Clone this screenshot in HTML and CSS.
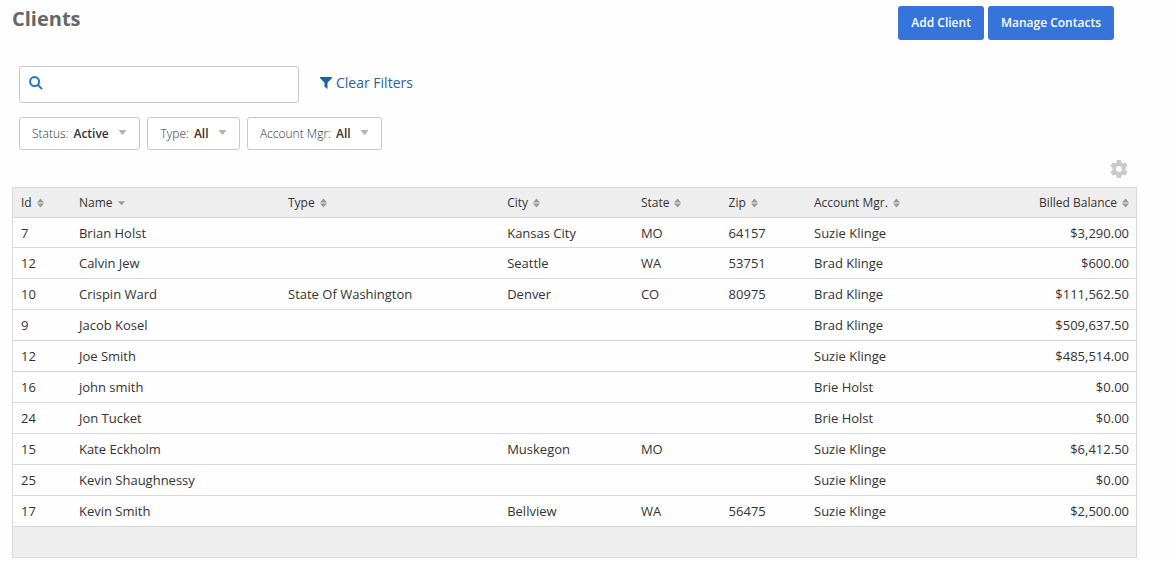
FILE: index.html
```html
<!DOCTYPE html>
<html lang="en">
<head>
<meta charset="utf-8">
<meta name="viewport" content="width=device-width, initial-scale=1">
<title>Clients</title>
<link rel="stylesheet" href="styles.css">
</head>
<body>
<svg class="defs" aria-hidden="true">
  <symbol id="sort" viewBox="0 0 7 10"><path d="M3.5 0.4 7 4.4H0ZM0 5.6H7L3.500 9.600Z"/></symbol>
  <symbol id="down" viewBox="0 0 7 10"><path d="M0 3.200H7L3.500 7.200Z"/></symbol>
  <symbol id="caret" viewBox="0 0 8 5"><path d="M0 0H8L4.600 4.600H3.400Z"/></symbol>
</svg>
<main class="page">
  <header class="top">
    <h1 class="title">Clients</h1>
    <div class="actions">
      <button class="btn" type="button">Add Client</button>
      <button class="btn" type="button">Manage Contacts</button>
    </div>
  </header>

  <form class="controls">
    <div class="search-row">
      <label class="search">
        <svg class="search-icon" viewBox="0 0 14 14" aria-hidden="true"><circle cx="5.6" cy="5.6" r="4.5"/><path d="M9 9 13.1 13.1"/></svg>
        <input class="search-input" type="search" aria-label="Search clients">
      </label>
      <a class="clear" href="#"><svg class="funnel" viewBox="0 0 12 12" aria-hidden="true"><path d="M0 0H12V1L7.500 5.700V12L4.500 9.700V5.700L0 1Z"/></svg>Clear Filters</a>
    </div>
    <div class="filters">
      <label class="filter"><span class="filter-name">Status:</span><select class="filter-select"><option>Active</option></select><svg class="caret" aria-hidden="true"><use href="#caret"/></svg></label>
      <label class="filter"><span class="filter-name">Type:</span><select class="filter-select"><option>All</option></select><svg class="caret" aria-hidden="true"><use href="#caret"/></svg></label>
      <label class="filter"><span class="filter-name">Account Mgr:</span><select class="filter-select"><option>All</option></select><svg class="caret" aria-hidden="true"><use href="#caret"/></svg></label>
    </div>
  </form>

  <div class="tools">
    <button class="gear" type="button" aria-label="Table settings">
      <svg class="gear-icon" viewBox="0 0 24 24" aria-hidden="true"><path fill-rule="evenodd" d="M9.300 0h5.400l.7 3.400 1.900 1.100 3.300-1.100 2.700 4.600-2.600 2.300v3.400l2.600 2.300-2.700 4.600-3.300-1.100-1.900 1.100-.7 3.400H9.300l-.7-3.400-1.900-1.100-3.300 1.100L.7 16l2.600-2.300v-3.400L.7 8l2.700-4.600 3.300 1.100 1.900-1.100ZM12 8a4 4 0 1 0 0 8 4 4 0 0 0 0-8Z"/></svg>
    </button>
  </div>

  <table class="clients">
    <colgroup><col class="c-id"><col class="c-name"><col class="c-type"><col class="c-city"><col class="c-state"><col class="c-zip"><col class="c-mgr"><col class="c-balance"></colgroup>
    <thead>
      <tr>
        <th>Id<svg class="sort"><use href="#sort"/></svg></th>
        <th>Name<svg class="sort"><use href="#down"/></svg></th>
        <th>Type<svg class="sort"><use href="#sort"/></svg></th>
        <th>City<svg class="sort"><use href="#sort"/></svg></th>
        <th>State<svg class="sort"><use href="#sort"/></svg></th>
        <th>Zip<svg class="sort"><use href="#sort"/></svg></th>
        <th>Account Mgr.<svg class="sort"><use href="#sort"/></svg></th>
        <th class="num">Billed Balance<svg class="sort"><use href="#sort"/></svg></th>
      </tr>
    </thead>
    <tbody>
      <tr><td>7</td><td>Brian Holst</td><td></td><td>Kansas City</td><td>MO</td><td>64157</td><td>Suzie Klinge</td><td class="num">$3,290.00</td></tr>
      <tr><td>12</td><td>Calvin Jew</td><td></td><td>Seattle</td><td>WA</td><td>53751</td><td>Brad Klinge</td><td class="num">$600.00</td></tr>
      <tr><td>10</td><td>Crispin Ward</td><td>State Of Washington</td><td>Denver</td><td>CO</td><td>80975</td><td>Brad Klinge</td><td class="num">$111,562.50</td></tr>
      <tr><td>9</td><td>Jacob Kosel</td><td></td><td></td><td></td><td></td><td>Brad Klinge</td><td class="num">$509,637.50</td></tr>
      <tr><td>12</td><td>Joe Smith</td><td></td><td></td><td></td><td></td><td>Suzie Klinge</td><td class="num">$485,514.00</td></tr>
      <tr><td>16</td><td>john smith</td><td></td><td></td><td></td><td></td><td>Brie Holst</td><td class="num">$0.00</td></tr>
      <tr><td>24</td><td>Jon Tucket</td><td></td><td></td><td></td><td></td><td>Brie Holst</td><td class="num">$0.00</td></tr>
      <tr><td>15</td><td>Kate Eckholm</td><td></td><td>Muskegon</td><td>MO</td><td></td><td>Suzie Klinge</td><td class="num">$6,412.50</td></tr>
      <tr><td>25</td><td>Kevin Shaughnessy</td><td></td><td></td><td></td><td></td><td>Suzie Klinge</td><td class="num">$0.00</td></tr>
      <tr><td>17</td><td>Kevin Smith</td><td></td><td>Bellview</td><td>WA</td><td>56475</td><td>Suzie Klinge</td><td class="num">$2,500.00</td></tr>
    </tbody>
    <tfoot><tr><td colspan="8"></td></tr></tfoot>
  </table>
</main>
</body>
</html>
```
FILE: styles.css
```css
* { box-sizing: border-box; }
body {
  margin: 0;
  background: #fefefe;
  color: #333;
  font: 13px/18px "Open Sans", "Noto Sans", sans-serif;
}
button, input, select { font: inherit; }
.defs { position: absolute; width: 0; height: 0; }
.page { padding: 6px 35px 4px 12px; }

.top {
  display: flex;
  justify-content: space-between;
  align-items: flex-start;
  padding-right: 23px;
}
.title { margin: 0; font-size: 20px; line-height: 26px; font-weight: 700; color: #666; }
.actions { display: flex; gap: 4px; }
.btn {
  height: 34px;
  padding: 0 13px;
  border: 0;
  border-radius: 3px;
  background: #3673db;
  color: #fff;
  font-size: 12px;
  font-weight: 600;
}

.controls { margin: 26px 0 0; padding-left: 7px; }
.search-row { display: flex; align-items: center; gap: 21px; }
.search {
  display: flex;
  align-items: center;
  width: 280px;
  height: 37px;
  padding: 0 9px;
  border: 1px solid #c6c8cc;
  border-radius: 3px;
  background: #fff;
}
.search-icon { width: 14px; height: 14px; margin-bottom: 3px; fill: none; stroke: #1f78be; stroke-width: 2; }
.search-input { flex: 1; min-width: 0; padding: 0 8px; border: 0; outline: 0; background: none; }
.clear { display: flex; align-items: center; gap: 4px; padding-bottom: 3px; color: #2f6293; font-size: 14px; text-decoration: none; }
.funnel { width: 12px; height: 12px; fill: #1f629e; }
.filters { display: flex; gap: 7px; margin-top: 14px; }
.filter {
  display: flex;
  align-items: center;
  height: 33px;
  padding: 0 12px;
  border: 1px solid #c6c8cc;
  border-radius: 3px;
  background: #fff;
  font-size: 12px;
}
.filter-name { font-weight: 300; }
.filter-select {
  appearance: none;
  margin: 0 9px 0 5px;
  padding: 0;
  border: 0;
  background: none;
  color: #333;
  font-weight: 600;
}
.caret { width: 9px; height: 5px; margin-bottom: 2px; fill: #b3b3b3; }

.tools { display: flex; justify-content: flex-end; padding: 10px 9px 9px 0; }
.gear { display: flex; padding: 0; border: 0; background: none; }
.gear-icon { width: 18px; height: 18px; fill: #c9c9c9; }

.clients {
  width: 100%;
  table-layout: fixed;
  border-collapse: collapse;
  border: 1px solid #d8d9db;
}
.c-id { width: 5.2%; }
.c-name { width: 18.6%; }
.c-type { width: 19.5%; }
.c-city { width: 11.9%; }
.c-state { width: 7.8%; }
.c-zip { width: 7.6%; }
.c-mgr { width: 14.4%; }
.c-balance { width: 15%; }
th, td {
  height: 31px;
  padding: 0 7px 0 8px;
  border-bottom: 1px solid #d8d9db;
  text-align: left;
  white-space: nowrap;
}
th { height: 30px; background: #eee; font-size: 12px; font-weight: 400; }
tbody tr:first-child td { height: 30px; }
tfoot td { background: #eee; }
.num { text-align: right; }
.sort { width: 7px; height: 10px; margin-left: 5px; vertical-align: -1px; fill: #999; }
```
